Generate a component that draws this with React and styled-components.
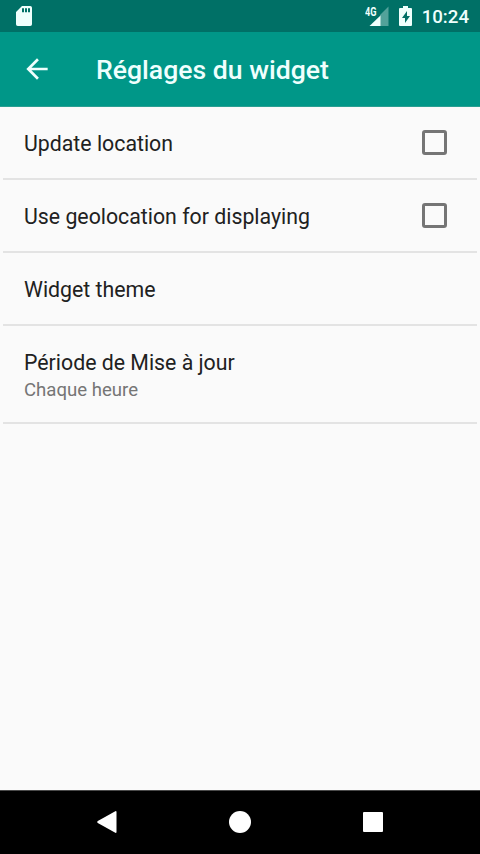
import { useState } from "react";
import styled, { createGlobalStyle } from "styled-components";

const GlobalStyle = createGlobalStyle`
  * {
    box-sizing: border-box;
  }

  body {
    margin: 0;
    background: #fafafa;
    font-family: Roboto, "Noto Sans", sans-serif;
  }
`;

const Screen = styled.div`
  display: flex;
  flex-direction: column;
  height: 100vh;
  overflow: hidden;
`;

const StatusBar = styled.div`
  display: flex;
  align-items: center;
  justify-content: space-between;
  flex: none;
  height: 32px;
  padding: 0 11px 0 16px;
  background: #007066;
  color: #effffc;
`;

const StatusGroup = styled.div`
  display: flex;
  align-items: center;
`;

const Clock = styled.span`
  margin-left: 10px;
  padding-top: 1px;
  font-size: 18.67px;
  font-weight: 500;
  line-height: 32px;
`;

const Network = styled.text`
  font-size: 12px;
  font-weight: 700;
  fill: #effffc;
`;

const Toolbar = styled.header`
  display: flex;
  align-items: center;
  flex: none;
  height: 75px;
  padding-left: 21px;
  border-bottom: 1px solid #2a9f92;
  background: #009788;
  color: #effffd;
`;

const BackButton = styled.button`
  display: flex;
  margin: 0;
  padding: 0;
  border: none;
  background: none;
  color: inherit;
`;

const Title = styled.h1`
  margin: 2px 0 0 43px;
  font-size: 26.6px;
  font-weight: 500;
  line-height: 32px;
`;

const List = styled.ul`
  flex: 1;
  margin: 0;
  padding: 0 3px;
  list-style: none;
`;

const Item = styled.li`
  display: flex;
  align-items: center;
  justify-content: space-between;
  height: ${({ $height }) => $height}px;
  padding: 0 30px 0 21px;
  border-bottom: 2px solid #e3e3e3;
`;

const ItemText = styled.div`
  padding-top: 3px;
`;

const ItemTitle = styled.div`
  color: #212121;
  font-size: 21.3px;
  line-height: 28px;
`;

const Summary = styled.div`
  color: #757575;
  font-size: 18.6px;
  line-height: 26px;
`;

const Checkbox = styled.button`
  width: 25px;
  height: 25px;
  margin: 0 0 1px;
  padding: 0;
  border: 3px solid #757575;
  border-radius: 3px;
  background: ${({ $checked }) => ($checked ? "#009788" : "transparent")};
`;

const NavBar = styled.nav`
  display: flex;
  align-items: center;
  justify-content: center;
  flex: none;
  height: 64px;
  padding-bottom: 1px;
  border-top: 1px solid #4a4a4a;
  background: #000;
`;

const NavButton = styled.button`
  display: flex;
  justify-content: center;
  width: 133.33px;
  margin: 0;
  padding: 0;
  border: none;
  background: none;
  color: #fff;
`;

const SdCardIcon = () => (
  <svg width="16" height="20" viewBox="0 0 16 20">
    <path
      fill="currentColor"
      fillRule="evenodd"
      d="M6 0h8.2Q16 0 16 1.8v16.4q0 1.8-1.8 1.8H1.8Q0 20 0 18.200V6zM6 2.300v4h2v-4zm3 0v4h2v-4zm3 0v4h2v-4z"
    />
  </svg>
);

const SignalIcon = () => (
  <svg width="34" height="20" viewBox="0 0 34 20">
    <path fill="currentColor" opacity="0.35" d="M15 9l8.500-8.500V20H15z" />
    <path fill="currentColor" d="M15.500 9.500V20H4.500z" />
    <Network x="0" y="9.500" textLength="11.500" lengthAdjust="spacingAndGlyphs">
      4G
    </Network>
  </svg>
);

const BatteryIcon = () => (
  <svg width="13" height="20" viewBox="0 0 13 20">
    <path
      fill="currentColor"
      fillRule="evenodd"
      d="M4 0h5v2h3q1 0 1 1v16q0 1-1 1H1q-1 0-1-1V3q0-1 1-1h3zM8 5l-5 7h3v5l5-7H8z"
    />
  </svg>
);

const BackIcon = () => (
  <svg width="32" height="32" viewBox="0 0 24 24">
    <path
      fill="currentColor"
      d="M20 11H7.830l5.590-5.590L12 4l-8 8 8 8 1.410-1.410L7.830 13H20z"
    />
  </svg>
);

const settings = [
  { id: "update", title: "Update location", height: 73, checkable: true },
  {
    id: "geolocation",
    title: "Use geolocation for displaying",
    height: 73,
    checkable: true,
  },
  { id: "theme", title: "Widget theme", height: 73 },
  {
    id: "period",
    title: "Période de Mise à jour",
    summary: "Chaque heure",
    height: 98,
  },
];

const App = () => {
  const [checked, setChecked] = useState({});

  const toggle = (id) => {
    setChecked({ ...checked, [id]: !checked[id] });
  };

  return (
    <Screen>
      <GlobalStyle />
      <StatusBar>
        <SdCardIcon />
        <StatusGroup>
          <SignalIcon />
          <BatteryIcon />
          <Clock>10:24</Clock>
        </StatusGroup>
      </StatusBar>
      <Toolbar>
        <BackButton>
          <BackIcon />
        </BackButton>
        <Title>Réglages du widget</Title>
      </Toolbar>
      <List>
        {settings.map((item) => (
          <Item key={item.id} $height={item.height}>
            <ItemText>
              <ItemTitle>{item.title}</ItemTitle>
              {item.summary && <Summary>{item.summary}</Summary>}
            </ItemText>
            {item.checkable && (
              <Checkbox
                $checked={checked[item.id]}
                onClick={() => toggle(item.id)}
              />
            )}
          </Item>
        ))}
      </List>
      <NavBar>
        <NavButton>
          <svg width="20" height="22" viewBox="0 0 20 22">
            <path
              fill="currentColor"
              d="M18.300.2Q19.500-.2 19.500 1v20q0 1.200-1.200.8L.8 12Q-.4 11 .8 10z"
            />
          </svg>
        </NavButton>
        <NavButton>
          <svg width="22" height="22" viewBox="0 0 22 22">
            <circle cx="11" cy="11" r="11" fill="currentColor" />
          </svg>
        </NavButton>
        <NavButton>
          <svg width="20" height="22" viewBox="0 0 20 22">
            <rect y="1" width="20" height="20" rx="1" fill="currentColor" />
          </svg>
        </NavButton>
      </NavBar>
    </Screen>
  );
};

export default App;
